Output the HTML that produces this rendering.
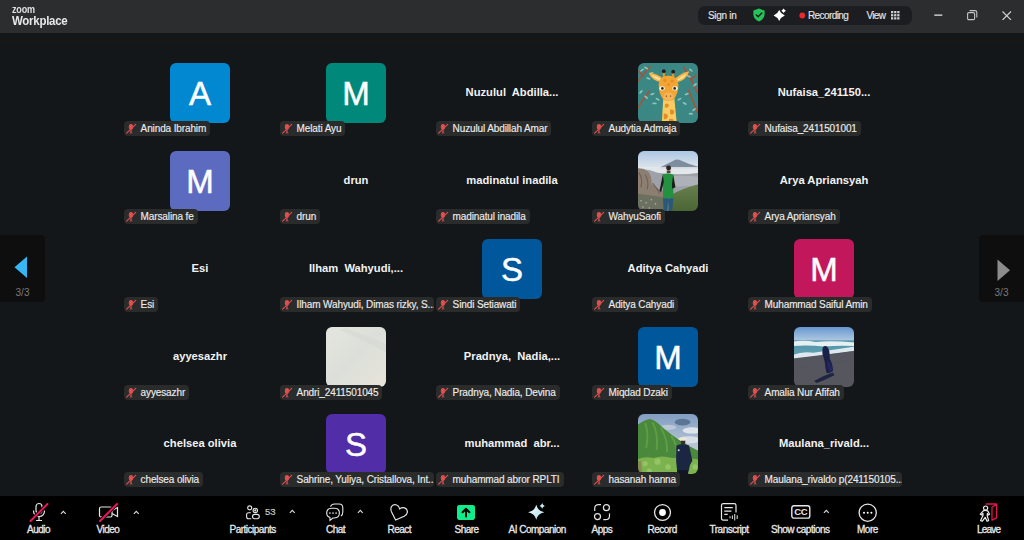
<!DOCTYPE html>
<html><head><meta charset="utf-8"><title>Zoom Workplace</title>
<style>
*{margin:0;padding:0;box-sizing:border-box}
html,body{width:1024px;height:540px;overflow:hidden}
body{position:relative;background:#14171a;font-family:"Liberation Sans",sans-serif;color:#fff}
.top{position:absolute;left:0;top:0;width:1024px;height:33px;background:#2c2d2f}
.logo1{position:absolute;left:11.5px;top:4px;font-size:10.5px;font-weight:700;line-height:11px;color:#e0e0e0;letter-spacing:-0.2px;transform:scaleX(0.86);transform-origin:0 0}
.logo2{position:absolute;left:12px;top:15px;font-size:12.5px;font-weight:700;line-height:13px;color:#e8e8e8;letter-spacing:-0.3px;transform:scaleX(0.92);transform-origin:0 0}
.pill{position:absolute;left:698px;top:6px;width:214px;height:19px;border-radius:7px;background:#1c1d20}
.tt{position:absolute;font-size:10px;line-height:10px;color:#e4e4e4;letter-spacing:-0.3px;white-space:nowrap;-webkit-text-stroke:0.15px #e4e4e4}
.sep{position:absolute;left:0;top:39px;width:1024px;height:3px;background:#191715}
.av{position:absolute;width:60px;height:60px;border-radius:6px;color:#fff;font-size:33px;line-height:62px;text-align:center;-webkit-text-stroke:0.5px #fff}
.ph{position:absolute;width:60px;height:60px;border-radius:6px;overflow:hidden}
.ph svg{display:block;filter:blur(0.45px);transform:scale(1.04)}
.nm{position:absolute;width:156px;height:14px;text-align:center;font-size:11.2px;font-weight:700;line-height:14px;color:#f2f2f2;white-space:pre}
.lb{position:absolute;height:15px;max-width:154px;overflow:hidden;border-radius:4px;background:#2a2b2b;padding:0 4px 0 16.6px;white-space:nowrap}
.lb .mi{position:absolute;left:1.5px;top:1.5px}
.lb span{display:block;font-size:10px;line-height:15px;color:#ececec;letter-spacing:-0.12px;-webkit-text-stroke:0.15px #ececec}
.nav{position:absolute;top:235px;width:45px;height:67px;background:#0e0e0f}
.nav.l{left:0;border-radius:0 4px 4px 0}
.nav.r{left:979px;border-radius:4px 0 0 4px}
.nav svg{position:absolute;top:21.2px}
.nav.l svg{left:14px}
.nav.r svg{left:18px;top:23.5px}
.nav span{position:absolute;top:53px;width:45px;text-align:center;font-size:10px;line-height:10px;color:#7a7a7a}
.nav.l span{left:0}
.nav.r span{left:0px}
.bar{position:absolute;left:0;top:496px;width:1024px;height:44px;background:#000}
.bl{position:absolute;top:524.5px;font-size:10px;line-height:10px;color:#e8e8e8;white-space:nowrap;letter-spacing:-0.5px;-webkit-text-stroke:0.3px #e8e8e8}
.ic{position:absolute}
.caret path{fill:none;stroke:#dcdcdc;stroke-width:1.1}

</style></head>
<body>
<div class="top">
 <div class="logo1">zoom</div>
 <div class="logo2">Workplace</div>
 <div class="pill"></div>
 <div class="tt" style="left:708px;top:11px">Sign in</div>
 <svg class="ic" style="left:752px;top:8px" width="14" height="14" viewBox="0 0 14 14"><path d="M7 0.6 L12.6 2.6 L12.6 6.4 Q12.4 11 7 13.6 Q1.6 11 1.4 6.4 L1.4 2.6 Z" fill="#23c45a"/><path d="M4.3 7 L6.2 8.8 L9.8 5" stroke="#1a1a1a" stroke-width="1.4" fill="none" stroke-linecap="round" stroke-linejoin="round"/></svg>
 <svg class="ic" style="left:772px;top:8px" width="15" height="14" viewBox="0 0 15 14"><path d="M7.2 1.9 Q8.8 5.9 12.8 7.5 Q8.8 9.1 7.2 13.1 Q5.6 9.1 1.6 7.5 Q5.6 5.9 7.2 1.9Z" fill="#fff"/><path d="M11.6 0.5 Q12.5 1.9 13.9 2.8 Q12.5 3.7 11.6 5.1 Q10.7 3.7 9.3 2.8 Q10.7 1.9 11.6 0.5Z" fill="#fff"/></svg>
 <svg class="ic" style="left:798.5px;top:12px" width="7" height="7"><circle cx="3.3" cy="3.5" r="2.9" fill="#e82a2a"/></svg>
 <div class="tt" style="left:808px;top:11px;letter-spacing:-0.6px">Recording</div>
 <div class="tt" style="left:866.5px;top:11px;letter-spacing:-0.7px">View</div>
 <svg class="ic" style="left:891px;top:11px" width="8.5" height="8.5" viewBox="0 0 9 9" fill="#cfcfcf"><rect x="0" y="0" width="2.4" height="2.4"/><rect x="3.3" y="0" width="2.4" height="2.4"/><rect x="6.6" y="0" width="2.4" height="2.4"/><rect x="0" y="3.3" width="2.4" height="2.4"/><rect x="3.3" y="3.3" width="2.4" height="2.4"/><rect x="6.6" y="3.3" width="2.4" height="2.4"/><rect x="0" y="6.6" width="2.4" height="2.4"/><rect x="3.3" y="6.6" width="2.4" height="2.4"/><rect x="6.6" y="6.6" width="2.4" height="2.4"/></svg>
 <svg class="ic" style="left:933.5px;top:14px" width="9" height="3"><rect x="0.3" y="0.4" width="8" height="1.5" fill="#c8c8c8"/></svg>
 <svg class="ic" style="left:967px;top:10px" width="10.5" height="10.5" viewBox="0 0 10.5 10.5" fill="none" stroke="#c4c4c4" stroke-width="1.1"><rect x="0.6" y="2.6" width="7" height="7" rx="1.2"/><path d="M2.6 0.6 L8 0.6 Q9.8 0.6 9.8 2.4 L9.8 7.6"/></svg>
 <svg class="ic" style="left:1002px;top:10.5px" width="9.5" height="9.5" viewBox="0 0 9.5 9.5" stroke="#d0d0d0" stroke-width="1.1"><path d="M0.5 0.5 L9 9 M9 0.5 L0.5 9"/></svg>
</div>

<div class="sep"></div>
<div class="av" style="left:170px;top:63.0px;background:#0288d1">A</div>
<div class="av" style="left:326px;top:63.0px;background:#00897b">M</div>
<div class="nm" style="left:434px;top:85.0px">Nuzulul  Abdilla...</div>
<div class="ph" style="left:638px;top:63.0px"><svg width="60" height="60" viewBox="0 0 60 60">
<rect width="60" height="60" fill="#3b8784"/>
<g stroke="#a4533f" stroke-width="1.5" fill="none" stroke-linecap="round"><path d="M0 20 Q6 12 13 4.5"/><path d="M0.5 45 Q6 36 12 28"/><path d="M45 5 Q53 18 60 33"/><path d="M49.5 27 Q55 40 60 53"/><path d="M6 14 L2 9"/><path d="M52 17 L57 13"/></g>
<g fill="#9ccfc6" opacity=".85"><ellipse cx="5" cy="8" rx="2.2" ry=".9" transform="rotate(-40 5 8)"/><ellipse cx="9" cy="6" rx="2.2" ry=".9" transform="rotate(30 9 6)"/><ellipse cx="14" cy="11" rx="2.2" ry=".9" transform="rotate(-20 14 11)"/><ellipse cx="11" cy="16" rx="2.2" ry=".9" transform="rotate(20 11 16)"/><ellipse cx="4" cy="29" rx="2.2" ry=".9" transform="rotate(-50 4 29)"/><ellipse cx="9" cy="34" rx="2.2" ry=".9" transform="rotate(40 9 34)"/><ellipse cx="15" cy="31" rx="2.2" ry=".9" transform="rotate(-20 15 31)"/><ellipse cx="20" cy="36" rx="2.2" ry=".9" transform="rotate(30 20 36)"/><ellipse cx="17" cy="40" rx="2.2" ry=".9"/><ellipse cx="41" cy="36" rx="2.2" ry=".9" transform="rotate(-30 41 36)"/><ellipse cx="46" cy="40" rx="2.2" ry=".9" transform="rotate(30 46 40)"/><ellipse cx="48" cy="31" rx="2.2" ry=".9" transform="rotate(-20 48 31)"/><ellipse cx="52" cy="8" rx="2.2" ry=".9" transform="rotate(40 52 8)"/><ellipse cx="56" cy="22" rx="2.2" ry=".9" transform="rotate(-40 56 22)"/><ellipse cx="50" cy="14" rx="2.2" ry=".9" transform="rotate(20 50 14)"/><ellipse cx="55" cy="46" rx="2.2" ry=".9" transform="rotate(-40 55 46)"/><ellipse cx="52" cy="50" rx="2.2" ry=".9"/></g>
<path d="M24 19.5 Q14 18.5 11.5 10.5 Q19.5 11 25 16 Z" fill="#f4b647"/><path d="M22 18 Q16 16 14 12.5 Q19 13.5 23 16Z" fill="#f9dc9a"/>
<path d="M37 16 Q43 10.5 50.5 9 Q48 17.5 38 20 Z" fill="#f4b647"/><path d="M38.5 17.5 Q43 13 48 11.5 Q46 16 39 18.5Z" fill="#f9dc9a"/>
<path d="M26 15 L26 9.5 M35 15 L35 10" stroke="#e39a2a" stroke-width="2"/>
<circle cx="26" cy="9" r="1.8" fill="#1d1d1d"/><circle cx="35" cy="9.5" r="1.8" fill="#1d1d1d"/>
<path d="M25.5 34 L36 34 L38.5 60 L24 60 Z" fill="#f7cc62"/>
<g fill="#e38d22"><path d="M27 41 Q30 39 31 42 Q30 45 27 44Z"/><path d="M32 46 Q36 45 36 49 Q34 52 32 50Z"/><path d="M26 50 Q29 49 30 52 Q29 56 26 55Z"/><path d="M31 55 Q35 54 36 57 L35 60 L31 60Z"/></g>
<path d="M30.5 13.5 Q39.5 13.5 40 22 Q40 30 35.5 36.5 Q30.5 39 25.5 36.5 Q21 30 21 22 Q21.5 13.5 30.5 13.5Z" fill="#f2a534"/>
<g fill="#e2861c" opacity=".7"><circle cx="27" cy="18" r="1.6"/><circle cx="34" cy="18.5" r="1.6"/><circle cx="30.5" cy="22" r="1.4"/></g>
<ellipse cx="30.5" cy="33.5" rx="5" ry="4" fill="#f4b45a"/>
<circle cx="28.5" cy="33" r=".7" fill="#6b3a12"/><circle cx="32.5" cy="33" r=".7" fill="#6b3a12"/>
<ellipse cx="24.3" cy="25.5" rx="2.6" ry="2.1" fill="#fff4dc"/><ellipse cx="36.7" cy="25.5" rx="2.6" ry="2.1" fill="#fff4dc"/>
<circle cx="24.6" cy="25.6" r="1.3" fill="#2a2a2a"/><circle cx="36.4" cy="25.6" r="1.3" fill="#2a2a2a"/>
</svg></div>
<div class="nm" style="left:746px;top:85.0px">Nufaisa_241150...</div>
<div class="av" style="left:170px;top:151.0px;background:#5c6bc0">M</div>
<div class="nm" style="left:278px;top:173.0px">drun</div>
<div class="nm" style="left:434px;top:173.0px">madinatul inadila</div>
<div class="ph" style="left:638px;top:151.0px"><svg width="60" height="60" viewBox="0 0 60 60">
<defs><linearGradient id="wsky" x1="0" y1="0" x2="0" y2="1"><stop offset="0" stop-color="#a9c4e4"/><stop offset=".25" stop-color="#d6e0ea"/><stop offset=".36" stop-color="#e4e8ec"/><stop offset="1" stop-color="#b8bcc0"/></linearGradient>
<linearGradient id="wgr" x1="0" y1="0" x2="0" y2="1"><stop offset="0" stop-color="#68804e"/><stop offset="1" stop-color="#4a6434"/></linearGradient></defs>
<rect width="60" height="60" fill="url(#wsky)"/>
<path d="M22 17 Q32 12 37 9.5 Q40 9 43 10.5 Q50 14 60 16.5 L60 18 L22 18Z" fill="#7e8ca0"/>
<rect y="16.5" width="60" height="5" fill="#e2e6ea" opacity=".85"/>
<path d="M0 19 Q10 18 20 22 Q40 25 60 22 L60 42 L0 45Z" fill="#9ea2a8"/>
<path d="M26 26 Q42 24 60 26 L60 36 Q42 33 26 38Z" fill="#b2b6bc" opacity=".8"/>
<path d="M0 18 Q6 17 11 21 Q15 26 14 33 Q20 38 26 40 L26 48 L0 48Z" fill="#8c7e70"/>
<path d="M2 22 Q6 28 4 36 M8 24 Q12 30 10 38 M15 32 Q19 36 22 42" stroke="#6e6258" stroke-width="1.1" fill="none"/>
<path d="M0 42 Q14 44 30 46 L30 60 L0 60Z" fill="#6c705e"/>
<g fill="#d8dcd6" opacity=".6"><circle cx="4" cy="49" r=".8"/><circle cx="9" cy="51" r=".8"/><circle cx="14" cy="48" r=".8"/><circle cx="6" cy="55" r=".8"/><circle cx="12" cy="56" r=".8"/><circle cx="18" cy="52" r=".8"/></g>
<path d="M32 44 Q44 37 60 33 L60 60 L30 60Z" fill="url(#wgr)"/>
<circle cx="30.6" cy="17.6" r="2.4" fill="#2b241f"/>
<path d="M28.8 19.8 L32.4 19.8 L32.4 22.5 L28.8 22.5Z" fill="#5a4030"/>
<path d="M25 23.5 Q30.5 21.8 35 23.8 L35.2 46.5 L25.2 46.5 Z" fill="#23913f"/>
<path d="M25 23.8 L21.8 39.5 L23.4 40.6 L26 31Z" fill="#1c1c1c"/><path d="M35 24 L37.2 36 L34 37.5 L33.8 33Z" fill="#1c1c1c"/>
<path d="M25.2 46.5 L35.2 46.5 L34 59 L30.6 59 L30 50 L29 59 L25.8 59Z" fill="#2a5878"/>
</svg></div>
<div class="nm" style="left:746px;top:173.0px">Arya Apriansyah</div>
<div class="nm" style="left:122px;top:261.0px">Esi</div>
<div class="nm" style="left:278px;top:261.0px">Ilham  Wahyudi,...</div>
<div class="av" style="left:482px;top:239.0px;background:#01579b">S</div>
<div class="nm" style="left:590px;top:261.0px">Aditya Cahyadi</div>
<div class="av" style="left:794px;top:239.0px;background:#c2185b">M</div>
<div class="nm" style="left:122px;top:349.0px">ayyesazhr</div>
<div class="ph" style="left:326px;top:327.0px"><svg width="60" height="60" viewBox="0 0 60 60">
<defs><linearGradient id="asky" x1="0" y1="0" x2="1" y2="1"><stop offset="0" stop-color="#e4e6de"/><stop offset=".5" stop-color="#dcdfd9"/><stop offset="1" stop-color="#e8e5da"/></linearGradient></defs>
<rect width="60" height="60" fill="url(#asky)"/>
<path d="M14 4 Q34 12 60 26 L60 18 Q36 8 20 2 Z" fill="#d4d8d2" opacity=".5"/>
</svg></div>
<div class="nm" style="left:434px;top:349.0px">Pradnya,  Nadia,...</div>
<div class="av" style="left:638px;top:327.0px;background:#01579b">M</div>
<div class="ph" style="left:794px;top:327.0px"><svg width="60" height="60" viewBox="0 0 60 60">
<defs><linearGradient id="msky" x1="0" y1="0" x2="0" y2="1"><stop offset="0" stop-color="#5f93d0"/><stop offset="1" stop-color="#b3cbe0"/></linearGradient>
<linearGradient id="msea" x1="0" y1="0" x2="0" y2="1"><stop offset="0" stop-color="#4f93a8"/><stop offset="1" stop-color="#6aa6b4"/></linearGradient></defs>
<rect width="60" height="15" fill="url(#msky)"/>
<rect y="14" width="60" height="20" fill="url(#msea)"/>
<path d="M0 15 Q12 13.5 22 15.5 Q36 14 60 16 L60 19.5 Q44 18.5 30 20 Q14 18 0 19.5Z" fill="#e6eff2"/>
<path d="M0 28 Q10 24 20 26 Q40 23 60 20 L60 24 Q40 27 24 29 Q10 31 0 32Z" fill="#dde9ee"/>
<path d="M0 31.5 Q30 28 60 24 L60 60 L0 60Z" fill="#56565e"/>
<path d="M0 40 Q30 36 60 33 L60 34 Q30 37 0 41Z" fill="#55555f" opacity=".6"/>
<path d="M20.5 53 Q28 48.5 38.5 45 L40 47.5 Q31 52 23 55Z" fill="#1f2440"/>
<path d="M28.5 22.5 Q29 18.8 31.8 19.4 Q34.5 20.5 35.2 25 L35.6 32 Q38.6 37 38.6 43.5 Q35.5 46 32.5 45.5 Q31 40 30.8 35 L29.5 30 Q28 27 28.5 22.5Z" fill="#1b2048"/>
<path d="M33 33 Q37 36 38 43 L35 44 Q33 38 33 33Z" fill="#2a2a6a" opacity=".7"/>
</svg></div>
<div class="nm" style="left:122px;top:436.4px">chelsea olivia</div>
<div class="av" style="left:326px;top:414.4px;background:#512da8">S</div>
<div class="nm" style="left:434px;top:436.4px">muhammad  abr...</div>
<div class="ph" style="left:638px;top:414.4px"><svg width="60" height="60" viewBox="0 0 60 60">
<defs><linearGradient id="hsky" x1="0" y1="0" x2="0" y2="1"><stop offset="0" stop-color="#7f9cc2"/><stop offset=".5" stop-color="#b4c2d2"/><stop offset="1" stop-color="#d0d8e0"/></linearGradient></defs>
<rect width="60" height="60" fill="url(#hsky)"/>
<ellipse cx="53" cy="17" rx="9" ry="3" fill="#e4e9ee" opacity=".9"/><ellipse cx="50" cy="26" rx="11" ry="3.5" fill="#dce2e8" opacity=".9"/><ellipse cx="30" cy="14" rx="8" ry="2.5" fill="#c8d2dc" opacity=".7"/>
<ellipse cx="44" cy="9" rx="7.5" ry="3.2" fill="#5d7595"/>
<path d="M0 12 Q8 6.5 12.5 6 Q17 6.5 26 15 Q40 27 60 37 L60 60 L0 60Z" fill="#4a883b"/>
<path d="M8 10 Q12 20 9 34 M15 9 Q21 20 19 36 M23 14 Q30 26 29 38 M33 22 Q40 32 38 40" stroke="#6aab4a" stroke-width="1.8" fill="none" opacity=".65"/>
<path d="M0 45 Q8 41.5 16 43.5 Q24 40.5 34 43.5 Q46 42.5 60 45 L60 60 L0 60Z" fill="#7cb34f"/>
<g fill="#9cc86a" opacity=".8"><circle cx="8" cy="49" r="2.5"/><circle cx="20" cy="47" r="3"/><circle cx="30" cy="52" r="2.5"/><circle cx="56" cy="52" r="2.5"/><circle cx="12" cy="56" r="2.5"/></g>
<path d="M0 47 L4 46 L5 58 L0 58Z" fill="#8a7058" opacity=".6"/>
<ellipse cx="44.5" cy="25.3" rx="3.6" ry="1.8" fill="#ebe6da"/>
<path d="M42.2 26.8 L46.8 26.8 L46.4 30 L42.6 30Z" fill="#3a302a"/>
<path d="M38 31.5 Q44 28.5 50.2 31.5 L53.5 46 L51.2 50 L49.8 56.5 L38.8 56.5 L37.8 46 Z" fill="#1b2643"/>
<circle cx="40.3" cy="36" r="1" fill="#c8d4e0"/>
<rect x="38.8" y="55" width="10.6" height="5" fill="#111526"/>
</svg></div>
<div class="nm" style="left:746px;top:436.4px">Maulana_rivald...</div>
<div class="lb" style="left:124px;top:121.0px"><svg class="mi" width="12" height="12" viewBox="0 0 12 12"><path d="M5 1.1 Q7.1 1.1 7.1 3.3 L7.1 4.4 Q7.1 6.4 5.6 6.6 L5.6 9.3 L6.9 10.3 L3.2 10.3 L4.4 9.3 L4.4 6.6 Q2.8 6.4 2.8 4.4 L2.8 3.3 Q2.8 1.1 5 1.1Z" fill="#de5050"/><path d="M0.6 10.1 L9.7 1.3" stroke="#de5050" stroke-width="1.15" stroke-linecap="round"/></svg><span>Aninda Ibrahim</span></div>
<div class="lb" style="left:280px;top:121.0px"><svg class="mi" width="12" height="12" viewBox="0 0 12 12"><path d="M5 1.1 Q7.1 1.1 7.1 3.3 L7.1 4.4 Q7.1 6.4 5.6 6.6 L5.6 9.3 L6.9 10.3 L3.2 10.3 L4.4 9.3 L4.4 6.6 Q2.8 6.4 2.8 4.4 L2.8 3.3 Q2.8 1.1 5 1.1Z" fill="#de5050"/><path d="M0.6 10.1 L9.7 1.3" stroke="#de5050" stroke-width="1.15" stroke-linecap="round"/></svg><span>Melati Ayu</span></div>
<div class="lb" style="left:436px;top:121.0px"><svg class="mi" width="12" height="12" viewBox="0 0 12 12"><path d="M5 1.1 Q7.1 1.1 7.1 3.3 L7.1 4.4 Q7.1 6.4 5.6 6.6 L5.6 9.3 L6.9 10.3 L3.2 10.3 L4.4 9.3 L4.4 6.6 Q2.8 6.4 2.8 4.4 L2.8 3.3 Q2.8 1.1 5 1.1Z" fill="#de5050"/><path d="M0.6 10.1 L9.7 1.3" stroke="#de5050" stroke-width="1.15" stroke-linecap="round"/></svg><span>Nuzulul Abdillah Amar</span></div>
<div class="lb" style="left:592px;top:121.0px"><svg class="mi" width="12" height="12" viewBox="0 0 12 12"><path d="M5 1.1 Q7.1 1.1 7.1 3.3 L7.1 4.4 Q7.1 6.4 5.6 6.6 L5.6 9.3 L6.9 10.3 L3.2 10.3 L4.4 9.3 L4.4 6.6 Q2.8 6.4 2.8 4.4 L2.8 3.3 Q2.8 1.1 5 1.1Z" fill="#de5050"/><path d="M0.6 10.1 L9.7 1.3" stroke="#de5050" stroke-width="1.15" stroke-linecap="round"/></svg><span>Audytia Admaja</span></div>
<div class="lb" style="left:748px;top:121.0px"><svg class="mi" width="12" height="12" viewBox="0 0 12 12"><path d="M5 1.1 Q7.1 1.1 7.1 3.3 L7.1 4.4 Q7.1 6.4 5.6 6.6 L5.6 9.3 L6.9 10.3 L3.2 10.3 L4.4 9.3 L4.4 6.6 Q2.8 6.4 2.8 4.4 L2.8 3.3 Q2.8 1.1 5 1.1Z" fill="#de5050"/><path d="M0.6 10.1 L9.7 1.3" stroke="#de5050" stroke-width="1.15" stroke-linecap="round"/></svg><span>Nufaisa_2411501001</span></div>
<div class="lb" style="left:124px;top:209.0px"><svg class="mi" width="12" height="12" viewBox="0 0 12 12"><path d="M5 1.1 Q7.1 1.1 7.1 3.3 L7.1 4.4 Q7.1 6.4 5.6 6.6 L5.6 9.3 L6.9 10.3 L3.2 10.3 L4.4 9.3 L4.4 6.6 Q2.8 6.4 2.8 4.4 L2.8 3.3 Q2.8 1.1 5 1.1Z" fill="#de5050"/><path d="M0.6 10.1 L9.7 1.3" stroke="#de5050" stroke-width="1.15" stroke-linecap="round"/></svg><span>Marsalina fe</span></div>
<div class="lb" style="left:280px;top:209.0px"><svg class="mi" width="12" height="12" viewBox="0 0 12 12"><path d="M5 1.1 Q7.1 1.1 7.1 3.3 L7.1 4.4 Q7.1 6.4 5.6 6.6 L5.6 9.3 L6.9 10.3 L3.2 10.3 L4.4 9.3 L4.4 6.6 Q2.8 6.4 2.8 4.4 L2.8 3.3 Q2.8 1.1 5 1.1Z" fill="#de5050"/><path d="M0.6 10.1 L9.7 1.3" stroke="#de5050" stroke-width="1.15" stroke-linecap="round"/></svg><span>drun</span></div>
<div class="lb" style="left:436px;top:209.0px"><svg class="mi" width="12" height="12" viewBox="0 0 12 12"><path d="M5 1.1 Q7.1 1.1 7.1 3.3 L7.1 4.4 Q7.1 6.4 5.6 6.6 L5.6 9.3 L6.9 10.3 L3.2 10.3 L4.4 9.3 L4.4 6.6 Q2.8 6.4 2.8 4.4 L2.8 3.3 Q2.8 1.1 5 1.1Z" fill="#de5050"/><path d="M0.6 10.1 L9.7 1.3" stroke="#de5050" stroke-width="1.15" stroke-linecap="round"/></svg><span>madinatul inadila</span></div>
<div class="lb" style="left:592px;top:209.0px"><svg class="mi" width="12" height="12" viewBox="0 0 12 12"><path d="M5 1.1 Q7.1 1.1 7.1 3.3 L7.1 4.4 Q7.1 6.4 5.6 6.6 L5.6 9.3 L6.9 10.3 L3.2 10.3 L4.4 9.3 L4.4 6.6 Q2.8 6.4 2.8 4.4 L2.8 3.3 Q2.8 1.1 5 1.1Z" fill="#de5050"/><path d="M0.6 10.1 L9.7 1.3" stroke="#de5050" stroke-width="1.15" stroke-linecap="round"/></svg><span>WahyuSaofi</span></div>
<div class="lb" style="left:748px;top:209.0px"><svg class="mi" width="12" height="12" viewBox="0 0 12 12"><path d="M5 1.1 Q7.1 1.1 7.1 3.3 L7.1 4.4 Q7.1 6.4 5.6 6.6 L5.6 9.3 L6.9 10.3 L3.2 10.3 L4.4 9.3 L4.4 6.6 Q2.8 6.4 2.8 4.4 L2.8 3.3 Q2.8 1.1 5 1.1Z" fill="#de5050"/><path d="M0.6 10.1 L9.7 1.3" stroke="#de5050" stroke-width="1.15" stroke-linecap="round"/></svg><span>Arya Apriansyah</span></div>
<div class="lb" style="left:124px;top:297.0px"><svg class="mi" width="12" height="12" viewBox="0 0 12 12"><path d="M5 1.1 Q7.1 1.1 7.1 3.3 L7.1 4.4 Q7.1 6.4 5.6 6.6 L5.6 9.3 L6.9 10.3 L3.2 10.3 L4.4 9.3 L4.4 6.6 Q2.8 6.4 2.8 4.4 L2.8 3.3 Q2.8 1.1 5 1.1Z" fill="#de5050"/><path d="M0.6 10.1 L9.7 1.3" stroke="#de5050" stroke-width="1.15" stroke-linecap="round"/></svg><span>Esi</span></div>
<div class="lb" style="left:280px;top:297.0px"><svg class="mi" width="12" height="12" viewBox="0 0 12 12"><path d="M5 1.1 Q7.1 1.1 7.1 3.3 L7.1 4.4 Q7.1 6.4 5.6 6.6 L5.6 9.3 L6.9 10.3 L3.2 10.3 L4.4 9.3 L4.4 6.6 Q2.8 6.4 2.8 4.4 L2.8 3.3 Q2.8 1.1 5 1.1Z" fill="#de5050"/><path d="M0.6 10.1 L9.7 1.3" stroke="#de5050" stroke-width="1.15" stroke-linecap="round"/></svg><span>Ilham Wahyudi, Dimas rizky, S...</span></div>
<div class="lb" style="left:436px;top:297.0px"><svg class="mi" width="12" height="12" viewBox="0 0 12 12"><path d="M5 1.1 Q7.1 1.1 7.1 3.3 L7.1 4.4 Q7.1 6.4 5.6 6.6 L5.6 9.3 L6.9 10.3 L3.2 10.3 L4.4 9.3 L4.4 6.6 Q2.8 6.4 2.8 4.4 L2.8 3.3 Q2.8 1.1 5 1.1Z" fill="#de5050"/><path d="M0.6 10.1 L9.7 1.3" stroke="#de5050" stroke-width="1.15" stroke-linecap="round"/></svg><span>Sindi Setiawati</span></div>
<div class="lb" style="left:592px;top:297.0px"><svg class="mi" width="12" height="12" viewBox="0 0 12 12"><path d="M5 1.1 Q7.1 1.1 7.1 3.3 L7.1 4.4 Q7.1 6.4 5.6 6.6 L5.6 9.3 L6.9 10.3 L3.2 10.3 L4.4 9.3 L4.4 6.6 Q2.8 6.4 2.8 4.4 L2.8 3.3 Q2.8 1.1 5 1.1Z" fill="#de5050"/><path d="M0.6 10.1 L9.7 1.3" stroke="#de5050" stroke-width="1.15" stroke-linecap="round"/></svg><span>Aditya Cahyadi</span></div>
<div class="lb" style="left:748px;top:297.0px"><svg class="mi" width="12" height="12" viewBox="0 0 12 12"><path d="M5 1.1 Q7.1 1.1 7.1 3.3 L7.1 4.4 Q7.1 6.4 5.6 6.6 L5.6 9.3 L6.9 10.3 L3.2 10.3 L4.4 9.3 L4.4 6.6 Q2.8 6.4 2.8 4.4 L2.8 3.3 Q2.8 1.1 5 1.1Z" fill="#de5050"/><path d="M0.6 10.1 L9.7 1.3" stroke="#de5050" stroke-width="1.15" stroke-linecap="round"/></svg><span>Muhammad Saiful Amin</span></div>
<div class="lb" style="left:124px;top:385.0px"><svg class="mi" width="12" height="12" viewBox="0 0 12 12"><path d="M5 1.1 Q7.1 1.1 7.1 3.3 L7.1 4.4 Q7.1 6.4 5.6 6.6 L5.6 9.3 L6.9 10.3 L3.2 10.3 L4.4 9.3 L4.4 6.6 Q2.8 6.4 2.8 4.4 L2.8 3.3 Q2.8 1.1 5 1.1Z" fill="#de5050"/><path d="M0.6 10.1 L9.7 1.3" stroke="#de5050" stroke-width="1.15" stroke-linecap="round"/></svg><span>ayyesazhr</span></div>
<div class="lb" style="left:280px;top:385.0px"><svg class="mi" width="12" height="12" viewBox="0 0 12 12"><path d="M5 1.1 Q7.1 1.1 7.1 3.3 L7.1 4.4 Q7.1 6.4 5.6 6.6 L5.6 9.3 L6.9 10.3 L3.2 10.3 L4.4 9.3 L4.4 6.6 Q2.8 6.4 2.8 4.4 L2.8 3.3 Q2.8 1.1 5 1.1Z" fill="#de5050"/><path d="M0.6 10.1 L9.7 1.3" stroke="#de5050" stroke-width="1.15" stroke-linecap="round"/></svg><span>Andri_2411501045</span></div>
<div class="lb" style="left:436px;top:385.0px"><svg class="mi" width="12" height="12" viewBox="0 0 12 12"><path d="M5 1.1 Q7.1 1.1 7.1 3.3 L7.1 4.4 Q7.1 6.4 5.6 6.6 L5.6 9.3 L6.9 10.3 L3.2 10.3 L4.4 9.3 L4.4 6.6 Q2.8 6.4 2.8 4.4 L2.8 3.3 Q2.8 1.1 5 1.1Z" fill="#de5050"/><path d="M0.6 10.1 L9.7 1.3" stroke="#de5050" stroke-width="1.15" stroke-linecap="round"/></svg><span>Pradnya, Nadia, Devina</span></div>
<div class="lb" style="left:592px;top:385.0px"><svg class="mi" width="12" height="12" viewBox="0 0 12 12"><path d="M5 1.1 Q7.1 1.1 7.1 3.3 L7.1 4.4 Q7.1 6.4 5.6 6.6 L5.6 9.3 L6.9 10.3 L3.2 10.3 L4.4 9.3 L4.4 6.6 Q2.8 6.4 2.8 4.4 L2.8 3.3 Q2.8 1.1 5 1.1Z" fill="#de5050"/><path d="M0.6 10.1 L9.7 1.3" stroke="#de5050" stroke-width="1.15" stroke-linecap="round"/></svg><span>Miqdad Dzaki</span></div>
<div class="lb" style="left:748px;top:385.0px"><svg class="mi" width="12" height="12" viewBox="0 0 12 12"><path d="M5 1.1 Q7.1 1.1 7.1 3.3 L7.1 4.4 Q7.1 6.4 5.6 6.6 L5.6 9.3 L6.9 10.3 L3.2 10.3 L4.4 9.3 L4.4 6.6 Q2.8 6.4 2.8 4.4 L2.8 3.3 Q2.8 1.1 5 1.1Z" fill="#de5050"/><path d="M0.6 10.1 L9.7 1.3" stroke="#de5050" stroke-width="1.15" stroke-linecap="round"/></svg><span>Amalia Nur Afifah</span></div>
<div class="lb" style="left:124px;top:472.4px"><svg class="mi" width="12" height="12" viewBox="0 0 12 12"><path d="M5 1.1 Q7.1 1.1 7.1 3.3 L7.1 4.4 Q7.1 6.4 5.6 6.6 L5.6 9.3 L6.9 10.3 L3.2 10.3 L4.4 9.3 L4.4 6.6 Q2.8 6.4 2.8 4.4 L2.8 3.3 Q2.8 1.1 5 1.1Z" fill="#de5050"/><path d="M0.6 10.1 L9.7 1.3" stroke="#de5050" stroke-width="1.15" stroke-linecap="round"/></svg><span>chelsea olivia</span></div>
<div class="lb" style="left:280px;top:472.4px"><svg class="mi" width="12" height="12" viewBox="0 0 12 12"><path d="M5 1.1 Q7.1 1.1 7.1 3.3 L7.1 4.4 Q7.1 6.4 5.6 6.6 L5.6 9.3 L6.9 10.3 L3.2 10.3 L4.4 9.3 L4.4 6.6 Q2.8 6.4 2.8 4.4 L2.8 3.3 Q2.8 1.1 5 1.1Z" fill="#de5050"/><path d="M0.6 10.1 L9.7 1.3" stroke="#de5050" stroke-width="1.15" stroke-linecap="round"/></svg><span>Sahrine, Yuliya, Cristallova, Int...</span></div>
<div class="lb" style="left:436px;top:472.4px"><svg class="mi" width="12" height="12" viewBox="0 0 12 12"><path d="M5 1.1 Q7.1 1.1 7.1 3.3 L7.1 4.4 Q7.1 6.4 5.6 6.6 L5.6 9.3 L6.9 10.3 L3.2 10.3 L4.4 9.3 L4.4 6.6 Q2.8 6.4 2.8 4.4 L2.8 3.3 Q2.8 1.1 5 1.1Z" fill="#de5050"/><path d="M0.6 10.1 L9.7 1.3" stroke="#de5050" stroke-width="1.15" stroke-linecap="round"/></svg><span>muhammad abror RPLTI</span></div>
<div class="lb" style="left:592px;top:472.4px"><svg class="mi" width="12" height="12" viewBox="0 0 12 12"><path d="M5 1.1 Q7.1 1.1 7.1 3.3 L7.1 4.4 Q7.1 6.4 5.6 6.6 L5.6 9.3 L6.9 10.3 L3.2 10.3 L4.4 9.3 L4.4 6.6 Q2.8 6.4 2.8 4.4 L2.8 3.3 Q2.8 1.1 5 1.1Z" fill="#de5050"/><path d="M0.6 10.1 L9.7 1.3" stroke="#de5050" stroke-width="1.15" stroke-linecap="round"/></svg><span>hasanah hanna</span></div>
<div class="lb" style="left:748px;top:472.4px"><svg class="mi" width="12" height="12" viewBox="0 0 12 12"><path d="M5 1.1 Q7.1 1.1 7.1 3.3 L7.1 4.4 Q7.1 6.4 5.6 6.6 L5.6 9.3 L6.9 10.3 L3.2 10.3 L4.4 9.3 L4.4 6.6 Q2.8 6.4 2.8 4.4 L2.8 3.3 Q2.8 1.1 5 1.1Z" fill="#de5050"/><path d="M0.6 10.1 L9.7 1.3" stroke="#de5050" stroke-width="1.15" stroke-linecap="round"/></svg><span>Maulana_rivaldo p(241150105...</span></div>
<div class="nav l"><svg width="14" height="23" viewBox="0 0 14 23"><path d="M13 0.5 L13 22 L0.5 11.2Z" fill="#38b6f4"/></svg><span>3/3</span></div>
<div class="nav r"><svg width="14" height="23" viewBox="0 0 14 23"><path d="M0.5 0.5 L0.5 22 L13 11.2Z" fill="#8c8c8c"/></svg><span>3/3</span></div>
<div class="bar"></div>
<!-- Audio -->
<svg class="ic" style="left:29px;top:502px" width="20" height="20" viewBox="0 0 20 20" fill="none" stroke="#e6e6e6" stroke-width="1.2"><rect x="7" y="1.5" width="6" height="10" rx="3"/><path d="M4.5 8.5 Q4.5 14.5 10 14.5 Q15.5 14.5 15.5 8.5"/><path d="M10 14.5 L10 18.5 M7 18.5 L13 18.5"/><path d="M1.5 19 L18.5 2" stroke="#000" stroke-width="3.6"/><path d="M1.5 19 L18.5 2" stroke="#f5135e" stroke-width="1.9" stroke-linecap="round"/></svg>
<div class="bl" style="left:27px">Audio</div>
<svg class="ic caret" style="left:59.5px;top:509.5px" width="7" height="5" viewBox="0 0 7 5"><path d="M0.9 3.8 L3.3 1.3 L5.7 3.8"/></svg>
<!-- Video -->
<svg class="ic" style="left:98px;top:502px" width="22" height="20" viewBox="0 0 22 20" fill="none" stroke="#e6e6e6" stroke-width="1.2"><rect x="1.5" y="5" width="12.5" height="10" rx="1.5"/><path d="M14 8.5 L19.5 5.5 L19.5 14.5 L14 11.5"/><path d="M2 19 L19 2" stroke="#000" stroke-width="3.6"/><path d="M2 19 L19 2" stroke="#f5135e" stroke-width="1.9" stroke-linecap="round"/></svg>
<div class="bl" style="left:96.5px">Video</div>
<svg class="ic caret" style="left:132.5px;top:509.5px" width="7" height="5" viewBox="0 0 7 5"><path d="M0.9 3.8 L3.3 1.3 L5.7 3.8"/></svg>
<!-- Participants -->
<svg class="ic" style="left:245px;top:505px" width="16" height="15" viewBox="0 0 16 15" fill="none" stroke="#e6e6e6" stroke-width="1.1"><circle cx="4.7" cy="2.9" r="2"/><circle cx="10.3" cy="5.4" r="2.2"/><circle cx="10.3" cy="5.4" r=".5" fill="#e6e6e6"/><path d="M5.8 7.8 L3.6 7.8 Q1.6 7.8 1.6 9.8 L1.6 11.8 Q1.6 13.8 3.6 13.8 L6.2 13.8"/><rect x="7.5" y="9.4" width="6.8" height="4.4" rx="2.2"/></svg>
<div class="tt" style="left:265px;top:506.5px;font-size:9.6px;color:#bdbdbd;letter-spacing:-0.2px">53</div>
<svg class="ic caret" style="left:289.0px;top:509.0px" width="7" height="5" viewBox="0 0 7 5"><path d="M0.9 3.8 L3.3 1.3 L5.7 3.8"/></svg>
<div class="bl" style="left:229.5px">Participants</div>
<!-- Chat -->
<svg class="ic" style="left:325px;top:503px" width="19" height="19" viewBox="0 0 19 19" fill="none" stroke="#e6e6e6" stroke-width="1.1"><path d="M5.5 3.6 Q6.5 1 9.5 1 L14 1 Q17.8 1 17.8 4.8 L17.8 9 Q17.8 11.8 16 13"/><path d="M7 5.2 L9.5 5.2 Q14.4 5.2 14.4 10.1 Q14.4 15 9.5 15 L7.8 15 L5 17.4 L5 14.6 Q1.7 13.5 1.7 10.1 Q1.7 5.2 7 5.2 Z" fill="#000"/><g fill="#e6e6e6" stroke="none"><rect x="4.2" y="9.4" width="1.4" height="1.4"/><rect x="7.3" y="9.4" width="1.4" height="1.4"/><rect x="10.4" y="9.4" width="1.4" height="1.4"/></g></svg>
<div class="bl" style="left:326px">Chat</div>
<svg class="ic caret" style="left:356.5px;top:509.0px" width="7" height="5" viewBox="0 0 7 5"><path d="M0.9 3.8 L3.3 1.3 L5.7 3.8"/></svg>
<!-- React -->
<svg class="ic" style="left:387.9px;top:503.8px" width="20" height="18" viewBox="0 0 20 18" fill="none" stroke="#e6e6e6" stroke-width="1.15"><path transform="rotate(20 10 9.5)" d="M10 16.5 L3.2 10 Q1 7.6 1.6 5 Q2.6 2 5.8 2 Q8.4 2.1 10 4.6 Q11.6 2.1 14.2 2 Q17.4 2 18.4 5 Q19 7.6 16.8 10 Z"/></svg>
<div class="bl" style="left:387.5px">React</div>
<!-- Share -->
<svg class="ic" style="left:456.5px;top:504.6px" width="18" height="15.2" viewBox="0 0 18 15.2"><rect x="0" y="0" width="18" height="15.1" rx="2.5" fill="#10ee8c"/><path d="M9 4 L9 11.6 M5.6 7.3 L9 3.8 L12.4 7.3" stroke="#000" stroke-width="2" fill="none" stroke-linecap="round" stroke-linejoin="round"/></svg>
<div class="bl" style="left:454.5px">Share</div>
<!-- AI Companion -->
<svg class="ic" style="left:526px;top:502px" width="20" height="20" viewBox="0 0 20 20"><defs><linearGradient id="aig" x1="0" y1="0" x2="1" y2="1"><stop offset="0" stop-color="#ffffff"/><stop offset="1" stop-color="#a6d8ea"/></linearGradient></defs><path d="M10.25 2.8 Q11.6 8.8 18.4 10.2 Q11.6 11.6 10.25 17.8 Q8.9 11.6 2.1 10.2 Q8.9 8.8 10.25 2.8Z" fill="url(#aig)"/><path d="M16.2 1 Q16.6 3.3 18.8 3.9 Q16.6 4.5 16.2 6.8 Q15.8 4.5 13.6 3.9 Q15.8 3.3 16.2 1Z" fill="#cdeef8"/></svg>
<div class="bl" style="left:508.5px">AI Companion</div>
<!-- Apps -->
<svg class="ic" style="left:593px;top:503px" width="19" height="19" viewBox="0 0 19 19" fill="none" stroke="#e6e6e6" stroke-width="1.2"><circle cx="13.4" cy="4.6" r="3"/><circle cx="4.5" cy="13.6" r="3"/><path d="M1.7 8.1 L1.7 5.6 Q1.7 1.6 5.7 1.6 L8 1.6"/><path d="M16.5 10.4 L16.5 12.7 Q16.5 16.7 12.5 16.7 L10.3 16.7"/></svg>
<div class="bl" style="left:591.5px">Apps</div>
<!-- Record -->
<svg class="ic" style="left:652.5px;top:502.7px" width="19" height="19" viewBox="0 0 19 19"><circle cx="9.5" cy="9.5" r="7.95" fill="none" stroke="#e6e6e6" stroke-width="1.3"/><circle cx="9.5" cy="9.5" r="3.4" fill="#fff"/></svg>
<div class="bl" style="left:647.5px">Record</div>
<!-- Transcript -->
<svg class="ic" style="left:720px;top:502px" width="19" height="20" viewBox="0 0 19 20" fill="none" stroke="#e6e6e6" stroke-width="1.2"><path d="M8 18.1 L3.2 18.1 Q1.5 18.1 1.5 16.4 L1.5 3.4 Q1.5 1.7 3.2 1.7 L14.3 1.7 Q16 1.7 16 3.4 L16 10.5"/><path d="M4.3 5.6 L12.8 5.6 M4.3 9.1 L11.4 9.1 M4.3 12.4 L7.7 12.4"/><path d="M10 14.2 L10 16.2 M12.4 13.5 L12.4 17 M14.7 12.1 L14.7 18.4 M17.2 13.3 L17.2 17" stroke-width="1.1" stroke="#d0d0d0"/></svg>
<div class="bl" style="left:709.5px">Transcript</div>
<!-- Show captions -->
<svg class="ic" style="left:791px;top:505.3px" width="20" height="14" viewBox="0 0 20 14"><rect x="0.8" y="0.7" width="18" height="12.4" rx="2.2" fill="none" stroke="#e6e6e6" stroke-width="1.4"/><text x="9.8" y="10.3" text-anchor="middle" font-family="Liberation Sans" font-weight="700" font-size="9.5" fill="#e6e6e6" letter-spacing="-0.2">CC</text></svg>
<div class="bl" style="left:771px">Show captions</div>
<svg class="ic caret" style="left:823.0px;top:509.0px" width="7" height="5" viewBox="0 0 7 5"><path d="M0.9 3.8 L3.3 1.3 L5.7 3.8"/></svg>
<!-- More -->
<svg class="ic" style="left:857.5px;top:502.5px" width="20" height="20" viewBox="0 0 20 20"><circle cx="9.7" cy="9.7" r="8.6" fill="none" stroke="#e6e6e6" stroke-width="1.3"/><circle cx="6" cy="9.7" r="1" fill="#fff"/><circle cx="9.7" cy="9.7" r="1" fill="#fff"/><circle cx="13.4" cy="9.7" r="1" fill="#fff"/></svg>
<div class="bl" style="left:857px">More</div>
<!-- Leave -->
<svg class="ic" style="left:979px;top:502.5px" width="20" height="20" viewBox="0 0 20 20"><path d="M6.8 1 L17.6 1 M13 4.2 L17.6 1.2 L17.6 14.8 L13 17.2 Z" fill="none" stroke="#e0174f" stroke-width="1.3" stroke-linejoin="round"/><g fill="none" stroke="#eaeaea" stroke-width="1.2" stroke-linejoin="round"><circle cx="6.6" cy="5.1" r="2.1"/><path d="M4.6 7.6 Q7.4 6.8 9 8.2 L10.6 11.2 L9.4 12 L8.4 10.4 L8.2 12.6 L9.6 17.6 L8 18.2 L6.2 14.3 L3.4 18.2 L1.6 17.6 L4 12.4 L4 10.4 L2.6 12 L1.3 11.2 Z"/></g></svg>
<div class="bl" style="left:977px;letter-spacing:-0.8px">Leave</div>

</body></html>
